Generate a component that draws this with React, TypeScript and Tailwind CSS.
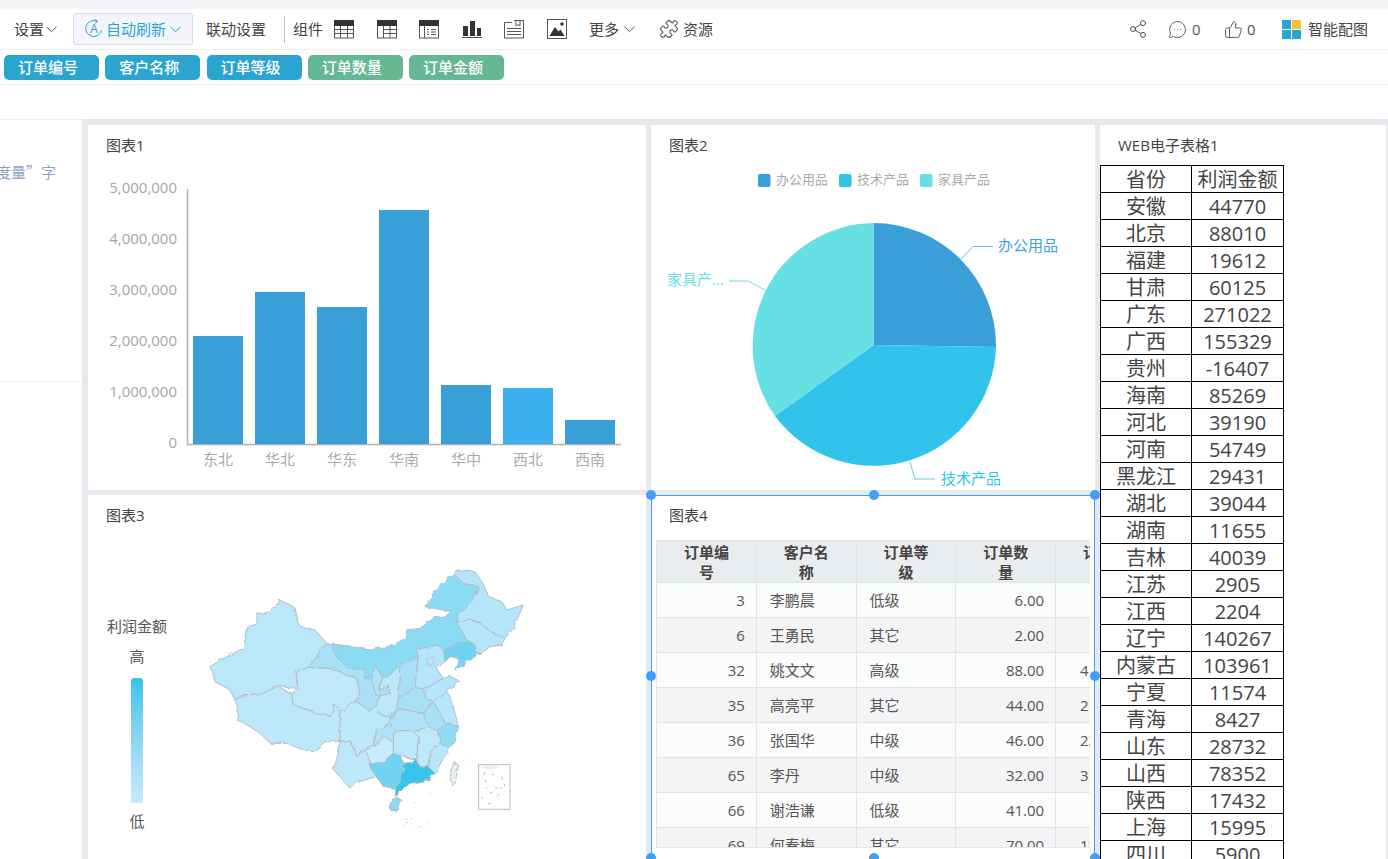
import React from 'react';
import { MessageCircleMore, Puzzle, Share2, ThumbsUp } from 'lucide-react';

const fields = [
  { name: '订单编号', color: 'bg-[#2ba5cf]' },
  { name: '客户名称', color: 'bg-[#2ba5cf]' },
  { name: '订单等级', color: 'bg-[#2ba5cf]' },
  { name: '订单数量', color: 'bg-[#66b894]' },
  { name: '订单金额', color: 'bg-[#66b894]' },
];

const bars = [
  { name: '东北', top: 336 },
  { name: '华北', top: 292 },
  { name: '华东', top: 307 },
  { name: '华南', top: 210 },
  { name: '华中', top: 385 },
  { name: '西北', top: 388, color: '#3cb0ee' },
  { name: '西南', top: 420 },
];

const ticks = ['5,000,000', '4,000,000', '3,000,000', '2,000,000', '1,000,000', '0'];

const orders = [
  ['3', '李鹏晨', '低级', '6.00', '261.54'],
  ['6', '王勇民', '其它', '2.00', '244.57'],
  ['32', '姚文文', '高级', '88.00', '41234.60'],
  ['35', '高亮平', '其它', '44.00', '21063.25'],
  ['36', '张国华', '中级', '46.00', '23182.40'],
  ['65', '李丹', '中级', '32.00', '31506.70'],
  ['66', '谢浩谦', '低级', '41.00', '685.30'],
  ['69', '何春梅', '其它', '70.00', '12790.15'],
];

const provinces = [
  ['安徽', '44770'], ['北京', '88010'], ['福建', '19612'], ['甘肃', '60125'], ['广东', '271022'],
  ['广西', '155329'], ['贵州', '-16407'], ['海南', '85269'], ['河北', '39190'], ['河南', '54749'],
  ['黑龙江', '29431'], ['湖北', '39044'], ['湖南', '11655'], ['吉林', '40039'], ['江苏', '2905'],
  ['江西', '2204'], ['辽宁', '140267'], ['内蒙古', '103961'], ['宁夏', '11574'], ['青海', '8427'],
  ['山东', '28732'], ['山西', '78352'], ['陕西', '17432'], ['上海', '15995'], ['四川', '5900'],
];

// map shapes, traced in a 1080x870 box
const mapShapes = [
  { fill: '#bbe7fa', points: '90,350 130,325 190,295 200,230 235,222 230,190 275,185 300,150 345,175 358,228 405,240 440,280 385,352 345,365 355,415 290,410 250,430 190,435 165,450 150,420 105,395 95,365' },
  { fill: '#bde8fa', points: '165,450 190,435 250,430 290,410 335,430 340,465 410,490 455,500 460,460 480,480 480,575 435,575 400,605 370,600 320,580 270,580 240,550 210,530 170,510 175,480' },
  { fill: '#c0e8fb', points: '345,365 385,352 450,355 490,370 530,385 540,425 530,455 510,460 490,480 480,480 460,460 455,500 410,490 340,465 335,430 355,415' },
  { fill: '#a8e0f7', points: '440,280 455,282 470,320 500,350 525,360 550,350 555,385 575,385 585,430 600,438 590,460 570,485 530,455 540,425 530,385 490,370 450,355 385,352' },
  { fill: '#a8e0f7', points: '600,420 625,405 630,430 600,438' },
  { fill: '#b0e3f9', points: '575,385 590,350 605,380 600,420 600,438 585,430' },
  { fill: '#8cdbf5', points: '455,282 510,288 570,300 640,285 675,265 680,240 720,235 760,205 800,195 815,185 790,180 735,170 760,130 800,90 820,70 850,100 895,110 880,155 840,190 830,215 860,270 790,300 770,285 710,300 715,320 660,345 625,380 605,380 590,350 575,385 555,385 550,350 525,360 500,350 470,320' },
  { fill: '#b4e5fa', points: '820,70 850,58 885,65 915,110 925,140 965,155 980,180 1030,165 1010,210 1000,235 975,265 940,250 900,220 870,210 830,215 840,190 880,155 895,110 850,100' },
  { fill: '#b4e5fa', points: '830,215 870,210 900,220 940,250 975,265 965,285 930,290 905,310 890,310 885,285 860,270' },
  { fill: '#6fd4f1', points: '790,300 860,270 885,285 890,310 850,345 825,360 835,325 810,320 795,335' },
  { fill: '#bde7fa', points: '625,380 660,345 655,430 655,445 650,480 630,500 595,490 590,460 600,438 630,430 625,405 600,420 605,380' },
  { fill: '#a8e0f7', points: '660,345 715,320 705,410 655,445 655,430' },
  { fill: '#b4e5fa', points: '710,300 770,285 790,300 795,335 770,355 790,385 730,420 705,410 715,320' },
  { fill: '#b4e5fa', points: '738,325 760,320 765,345 745,345' },
  { fill: '#b4e5fa', points: '735,445 730,420 790,385 810,380 840,395 800,420 770,445 760,455' },
  { fill: '#a8e0f7', points: '655,445 705,410 730,420 735,445 760,455 740,480 730,490 680,480 650,480' },
  { fill: '#b8e6fa', points: '770,445 800,420 820,470 835,530 795,520 780,490 760,455' },
  { fill: '#a8e0f7', points: '740,480 760,455 780,490 795,520 775,545 745,530 730,490' },
  { fill: '#b0e3f9', points: '650,480 680,480 730,490 745,530 700,545 650,545 630,525' },
  { fill: '#8fdcf5', points: '795,520 835,530 825,575 810,595 780,580 775,545' },
  { fill: '#b8e6fa', points: '760,590 780,580 810,595 790,625 765,670 745,650' },
  { fill: '#c0e8fb', points: '700,545 745,530 775,545 780,580 760,590 745,650 720,650 710,630 715,560' },
  { fill: '#bde8fa', points: '640,550 650,545 700,545 715,560 710,630 705,630 660,615 640,610 640,580' },
  { fill: '#bde8fa', points: '480,480 490,480 510,460 530,455 570,485 590,460 595,490 630,500 620,530 585,545 580,590 555,600 530,620 510,570 480,575' },
  { fill: '#b0e3f9', points: '585,545 620,530 630,500 650,480 630,525 650,545 640,550 640,580 615,560 580,590' },
  { fill: '#c7ecfb', points: '555,600 580,590 615,560 640,580 640,610 610,635 570,640' },
  { fill: '#bde8fa', points: '480,575 510,570 530,620 555,600 570,640 570,650 590,680 520,700 510,715 480,680 460,660 475,610' },
  { fill: '#6fd4f1', points: '570,650 570,640 610,635 640,610 660,615 672,640 672,650 660,695 645,715 610,710 590,680' },
  { fill: '#35c4ea', points: '672,650 672,640 700,635 705,630 710,630 720,650 745,650 765,670 745,690 690,700 660,725 655,740 648,740 645,715 660,695' },
  { fill: '#8cdbf5', points: '630,760 650,745 665,750 655,780 632,782' },
  { fill: '#e8f0f2', points: '808,670 825,637 835,645 825,700 815,705' },
];

const handles = [
  'left-[-6px] top-[-6px]',
  'left-[217px] top-[-6px]',
  'right-[-6px] top-[-6px]',
  'left-[-6px] top-[175px]',
  'right-[-6px] top-[175px]',
  'left-[-6px] top-[357px]',
  'left-[217px] top-[357px]',
  'right-[-6px] top-[357px]',
];

function Chevron({ className }: { className: string }) {
  return (
    <svg width="11" height="7" viewBox="0 0 11 7" fill="none" stroke="currentColor" className={className}>
      <path d="M0.5 0.8L5.5 5.6L10.5 0.8" />
    </svg>
  );
}

function TableIcon({ variant }: { variant: 'grid' | 'cross' | 'list' }) {
  return (
    <svg width="20" height="20" viewBox="0 0 20 20" fill="none" stroke="#555">
      <rect x="0.5" y="1.5" width="19" height="17.5" />
      <rect x="0" y="1" width="20" height="6" fill="#333" stroke="none" />
      {variant === 'grid' && <path d="M0 10.5H20M0 14.5H20M6.5 7V19M13.5 7V19" />}
      {variant === 'cross' && <path d="M6.5 10.5H20M6.5 14.5H20M6.5 7V19M13 7V19" />}
      {variant === 'list' && <path d="M5.5 7V19M8 10.5H10M8 13H10M8 15.5H10M12 10.5H17M12 13H17M12 15.5H17" />}
    </svg>
  );
}

function ToolIcons() {
  return (
    <div className="flex items-center gap-[22.6px] ml-[11px]">
      <TableIcon variant="grid" />
      <TableIcon variant="cross" />
      <TableIcon variant="list" />
      <svg width="20" height="20" viewBox="0 0 20 20">
        <path d="M1 7H6V17H1ZM8 2H13V17H8ZM15 9H19V17H15Z" fill="#333" />
        <path d="M0 18.5H20" stroke="#555" />
      </svg>
      <svg width="20" height="20" viewBox="0 0 20 20" fill="none" stroke="#555">
        <path d="M10 1.5H19.5V19H0.5V3.5H8M12 1.5V7L14 5.5L16 7V1.5M3 9.5H17M3 12.5H17M3 15.5H17" />
      </svg>
      <svg width="20" height="20" viewBox="0 0 20 20">
        <rect x="0.5" y="0.5" width="19" height="19" fill="none" stroke="#555" />
        <path d="M2.5 17L8 8L11.5 12.5L13.5 10.5L17.5 17Z" fill="#333" />
        <circle cx="15" cy="5" r="1.7" fill="#333" />
      </svg>
    </div>
  );
}

function Toolbar() {
  return (
    <div className="flex items-center h-[41px] pl-[14px] pr-[20px] border-b border-[#eeeeee] text-[15px] text-[#444] bg-white">
      <span>设置</span>
      <Chevron className="ml-[2px] text-[#555]" />
      <div className="flex items-center w-[120px] h-[32px] ml-[16px] pl-[11px] rounded-[3px] border border-[#d5dcec] bg-[#f3f5fa] text-[#2ba5cf]">
        <svg width="18" height="20" viewBox="0 0 18 20" fill="none" stroke="currentColor">
          <path d="M12 2.2A8 8 0 1 0 16.6 11M9.5 0.5L12.5 2.2L10 4.5" />
          <text x="9" y="14" textAnchor="middle" fontSize="12" fill="currentColor" stroke="none">A</text>
        </svg>
        <span className="ml-[3px]">自动刷新</span>
        <Chevron className="ml-[4px]" />
      </div>
      <span className="ml-[13px]">联动设置</span>
      <div className="w-px h-[27px] ml-[18px] bg-[#bbbbbb]" />
      <span className="ml-[8px]">组件</span>
      <ToolIcons />
      <span className="ml-[22px]">更多</span>
      <Chevron className="ml-[5px] text-[#555]" />
      <Puzzle className="w-[20px] h-[20px] ml-[24px] text-[#555]" strokeWidth={1.3} />
      <span className="ml-[4px]">资源</span>

      <div className="flex items-center ml-auto">
        <Share2 className="w-[20px] h-[20px] text-[#555]" strokeWidth={1.2} />
        <MessageCircleMore className="w-[19px] h-[19px] ml-[20px] text-[#555]" strokeWidth={1.2} />
        <span className="ml-[5px] w-[9px] text-[#555]">0</span>
        <ThumbsUp className="w-[19px] h-[19px] ml-[23px] text-[#555]" strokeWidth={1.2} />
        <span className="ml-[4px] w-[9px] text-[#555]">0</span>
        <div className="grid grid-cols-2 gap-px w-[19px] h-[19px] ml-[26px]">
          <div className="bg-[#2ba5cf]" />
          <div className="bg-[#f8c230]" />
          <div className="bg-[#2ba5cf]" />
          <div className="bg-[#2ba5cf]" />
        </div>
        <span className="ml-[7px]">智能配图</span>
      </div>
    </div>
  );
}

function CardTitle({ children }: { children: React.ReactNode }) {
  return <div className="h-[40px] pt-[10px] pl-[18px] text-[15px] leading-[20px] text-[#444]">{children}</div>;
}

function BarChart() {
  return (
    <svg width="558" height="325" viewBox="88 165 558 325">
      <path d="M187.5 189V445M187 444.5H621" stroke="#b0b0b0" strokeWidth="1.5" fill="none" />
      {ticks.map((t, i) => (
        <text key={t} x="177" y={193 + i * 51} textAnchor="end" fontSize="15" fill="#a6a6a6">{t}</text>
      ))}
      {bars.map((b, i) => (
        <g key={b.name}>
          <rect x={193 + i * 62} y={b.top} width="50" height={444 - b.top} fill={b.color || '#389fd9'} />
          <text x={218 + i * 62} y="465" textAnchor="middle" fontSize="15" fill="#aaaaaa">{b.name}</text>
        </g>
      ))}
    </svg>
  );
}

function PieChart() {
  return (
    <svg width="444" height="325" viewBox="651 165 444 325">
      {[
        { x: 758, label: '办公用品', color: '#389fd9' },
        { x: 839, label: '技术产品', color: '#31c3e9' },
        { x: 920, label: '家具产品', color: '#66e0e4' },
      ].map(l => (
        <g key={l.label}>
          <rect x={l.x} y="174" width="12.5" height="13" rx="2" fill={l.color} />
          <text x={l.x + 18} y="184" fontSize="13" fill="#aaaaaa">{l.label}</text>
        </g>
      ))}
      <path d="M873.5 345L873.5 223A122.5 122.5 0 0 1 996 347Z" fill="#3a9fd9" />
      <path d="M873.5 345L996 347A122.5 122.5 0 0 1 775 416Z" fill="#31c3e9" />
      <path d="M873.5 345L775 416A122.5 122.5 0 0 1 873.5 223Z" fill="#66e0e4" />
      <path d="M960 260L973 246.5H993" stroke="#6ab8e6" fill="none" />
      <path d="M910 462L915 479H935" stroke="#5dd0ee" fill="none" />
      <path d="M729 281H748L765 290" stroke="#66e0e4" fill="none" />
      <text x="998" y="251" fontSize="15" fill="#3aa3dc">办公用品</text>
      <text x="941" y="484" fontSize="15" fill="#31c3e9">技术产品</text>
      <text x="667" y="285" fontSize="15" fill="#66e0e4">家具产...</text>
    </svg>
  );
}

function ChinaMap() {
  return (
    <svg width="360" height="290" viewBox="0 0 1080 870" className="shrink-0 ml-[2px]">
      <defs>
        <filter id="rough" x="-5%" y="-5%" width="110%" height="110%">
          <feTurbulence type="fractalNoise" baseFrequency="0.045" numOctaves="2" seed="4" />
          <feDisplacementMap in="SourceGraphic" scale="14" />
        </filter>
      </defs>
      <g filter="url(#rough)">
        {mapShapes.map((s, i) => (
          <polygon key={i} points={s.points} fill={s.fill} stroke="#b3bcc4" strokeWidth="3" strokeLinejoin="round" />
        ))}
      </g>
      <rect x="896" y="644" width="94" height="134" fill="#ffffff" stroke="#b8bcc0" strokeWidth="3" />
      <path d="M898 646C915 665 945 660 965 644Z" fill="#e8f0f2" />
      <path
        d="M915 665l-3 10M935 672l8 3M965 680l3 8M915 690l4 8M972 700l2 8M918 712l3 6M945 712l10 4M930 730l8-4M950 740l8-8M905 740l2 6M925 762l8-3M960 712l6 2"
        stroke="#a9b0b5"
        strokeWidth="2.5"
        fill="none"
      />
      <path
        d="M672 808h10M690 806h6M676 818h8M690 822h6M672 826h6M712 830h12M740 822h8M745 728l8 4M700 758h6M850 630h6"
        stroke="#c9d0d5"
        strokeWidth="2"
        fill="none"
      />
    </svg>
  );
}

function OrderTable() {
  return (
    <div className="ml-[5px] w-[434px] h-[308px] overflow-hidden border-b border-[#e3e6ea]">
      <table className="table-fixed w-[500px] border-collapse text-[15px] text-[#555]">
        <thead>
          <tr className="h-[42px] bg-[#eaedf0] text-[#444]">
            {['订单编号', '客户名称', '订单等级', '订单数量', '订单金额'].map(h => (
              <th key={h} className="px-[24px] border border-[#e0e3e7] font-bold leading-[20px]">{h}</th>
            ))}
          </tr>
        </thead>
        <tbody>
          {orders.map((row, i) => (
            <tr key={row[0]} className={`h-[35px] ${i % 2 === 0 ? 'bg-[#fbfcfc]' : 'bg-[#f2f4f6]'}`}>
              <td className="pr-[11px] text-right border border-[#e0e3e7]">{row[0]}</td>
              <td className="pl-[13px] border border-[#e0e3e7]">{row[1]}</td>
              <td className="pl-[13px] border border-[#e0e3e7]">{row[2]}</td>
              <td className="pr-[11px] text-right border border-[#e0e3e7]">{row[3]}</td>
              <td className="pr-[11px] text-right border border-[#e0e3e7]">{row[4]}</td>
            </tr>
          ))}
        </tbody>
      </table>
    </div>
  );
}

function ProvinceTable() {
  return (
    <table className="table-fixed w-[184px] border-collapse text-[20px] text-[#444] text-center">
      <tbody>
        <tr className="h-[27px]">
          <td className="w-[91px] p-0 pt-px leading-[25px] border border-black">省份</td>
          <td className="p-0 pt-px leading-[25px] border border-black whitespace-nowrap">利润金额</td>
        </tr>
        {provinces.map(([name, value]) => (
          <tr key={name} className="h-[27px]">
            <td className="p-0 pt-px leading-[25px] border border-black">{name}</td>
            <td className="p-0 pt-px leading-[25px] border border-black">{value}</td>
          </tr>
        ))}
      </tbody>
    </table>
  );
}

export default function App() {
  return (
    <div className="flex flex-col w-[1388px] h-[859px] overflow-hidden bg-white font-['Open_Sans','Noto_Sans_CJK_SC',sans-serif]">
      <div className="h-[9px] bg-[#f4f5f6]" />
      <Toolbar />
      <div className="flex items-center gap-[6.25px] h-[35px] pl-[4px] border-b border-[#eeeeee]">
        {fields.map(f => (
          <span
            key={f.name}
            className={`flex items-center w-[95px] h-[25px] pl-[14px] rounded-[5px] text-[15px] font-medium text-white ${f.color}`}
          >
            {f.name}
          </span>
        ))}
      </div>
      <div className="h-[34px]" />

      <div className="flex flex-1 min-h-0 bg-[#e6eaee]">
        <div className="w-[82px] shrink-0 bg-white overflow-hidden border-t border-[#eeeeee]">
          <div className="flex justify-end h-[262px] pt-[42px] pr-[26px] border-b border-[#eeeeee] font-['Noto_Sans_CJK_SC',sans-serif] text-[15px] leading-[20px] text-[#8da2c0] whitespace-nowrap">
            “度量”字
          </div>
        </div>

        <div className="flex gap-[5px] pt-[6px] pl-[6px]">
          <div className="grid grid-cols-[558px_444px] grid-rows-[365px_365px] gap-[5px]">
            <div className="bg-white">
              <CardTitle>图表1</CardTitle>
              <BarChart />
            </div>
            <div className="bg-white">
              <CardTitle>图表2</CardTitle>
              <PieChart />
            </div>
            <div className="bg-white">
              <CardTitle>图表3</CardTitle>
              <div className="flex mt-[15px]">
                <div className="flex flex-col items-center w-[90px] pt-[66px] pl-[8px] text-[15px] leading-[20px] text-[#555]">
                  <span className="whitespace-nowrap">利润金额</span>
                  <span className="mt-[10px]">高</span>
                  <div className="w-[12px] h-[125px] mt-[12px] rounded-[3px] bg-gradient-to-b from-[#35c4ea] to-[#c8e9fb]" />
                  <span className="mt-[8px]">低</span>
                </div>
                <ChinaMap />
              </div>
            </div>
            <div className="relative bg-white">
              <CardTitle>图表4</CardTitle>
              <div className="pt-[5px]">
                <OrderTable />
              </div>
              <div className="absolute inset-0 border border-[#409eff] pointer-events-none">
                {handles.map(h => (
                  <span key={h} className={`absolute w-[10px] h-[10px] rounded-full bg-[#409eff] ${h}`} />
                ))}
              </div>
            </div>
          </div>

          <div className="w-[286px] bg-white">
            <CardTitle>WEB电子表格1</CardTitle>
            <ProvinceTable />
          </div>
        </div>
      </div>
    </div>
  );
}
